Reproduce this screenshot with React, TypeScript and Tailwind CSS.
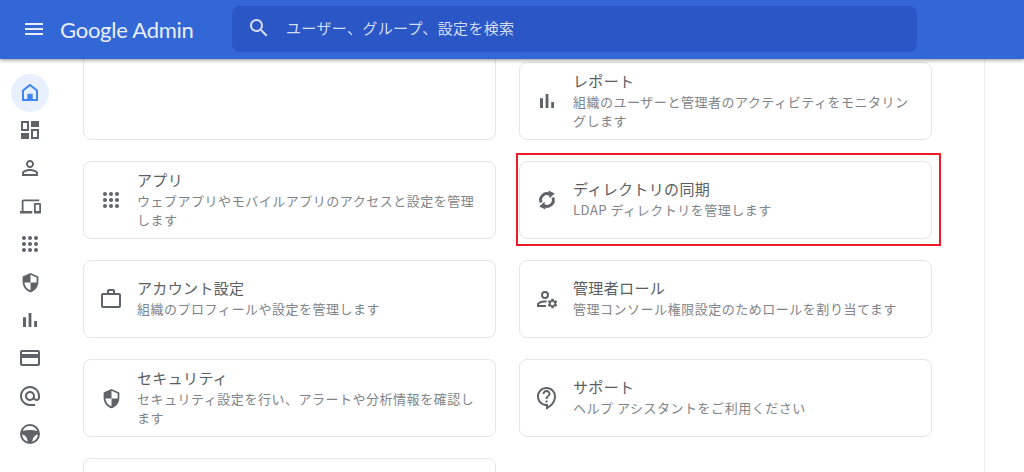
import { ReactNode } from "react";

const FONT = { fontFamily: '"Noto Sans CJK JP", "Noto Sans", sans-serif' };

const paths = {
  menu: "M3 18h18v-2H3v2zm0-5h18v-2H3v2zm0-7v2h18V6H3z",
  search:
    "M15.5 14h-.79l-.28-.27C15.41 12.59 16 11.11 16 9.5 16 5.91 13.09 3 9.5 3S3 5.91 3 9.5 5.91 16 9.5 16c1.61 0 3.09-.59 4.23-1.57l.27.28v.79l5 4.99L20.49 19l-4.99-5zm-6 0C7.01 14 5 11.99 5 9.5S7.01 5 9.5 5 14 7.01 14 9.5 11.99 14 9.5 14z",
  person:
    "M12 5.9c1.16 0 2.1.94 2.1 2.1s-.94 2.1-2.1 2.1S9.9 9.16 9.9 8s.94-2.1 2.1-2.1m0 9c2.97 0 6.1 1.46 6.1 2.1v1.1H5.9V17c0-.64 3.13-2.1 6.1-2.1M12 4C9.79 4 8 5.79 8 8s1.79 4 4 4 4-1.79 4-4-1.79-4-4-4zm0 9c-2.67 0-8 1.34-8 4v3h16v-3c0-2.66-5.33-4-8-4z",
  devices:
    "M4 6h18V4H4c-1.1 0-2 .9-2 2v11H0v3h14v-3H4V6zm19 2h-6c-.55 0-1 .45-1 1v10c0 .55.45 1 1 1h6c.55 0 1-.45 1-1V9c0-.55-.45-1-1-1zm-1 9h-4v-7h4v7z",
  shield:
    "M12 1L3 5v6c0 5.55 3.84 10.74 9 12 5.16-1.26 9-6.45 9-12V5l-9-4zm0 10.99h7c-.53 4.12-3.28 7.79-7 8.94V12H5V6.3l7-3.11v8.8z",
  bars: "M5 9.2h3V19H5zM10.6 5h2.8v14h-2.8zm5.6 8H19v6h-2.8z",
  card: "M20 4H4c-1.11 0-1.99.89-1.99 2L2 18c0 1.11.89 2 2 2h16c1.11 0 2-.89 2-2V6c0-1.11-.89-2-2-2zm0 14H4v-6h16v6zm0-10H4V6h16v2z",
  email:
    "M12 2C6.48 2 2 6.48 2 12s4.48 10 10 10h5v-2h-5c-4.34 0-8-3.66-8-8s3.66-8 8-8 8 3.66 8 8v1.43c0 .79-.71 1.57-1.5 1.57s-1.5-.78-1.5-1.57V12c0-2.76-2.24-5-5-5s-5 2.24-5 5 2.24 5 5 5c1.38 0 2.64-.56 3.54-1.47.65.89 1.77 1.47 2.96 1.47 1.97 0 3.5-1.6 3.5-3.57V12c0-5.52-4.48-10-10-10zm0 13c-1.66 0-3-1.34-3-3s1.34-3 3-3 3 1.34 3 3-1.34 3-3 3z",
  work: "M20 6h-4V4c0-1.11-.89-2-2-2h-4c-1.11 0-2 .89-2 2v2H4c-1.11 0-1.99.89-1.99 2L2 19c0 1.11.89 2 2 2h16c1.11 0 2-.89 2-2V8c0-1.11-.89-2-2-2zm-6 0h-4V4h4v2zm6 13H4V8h16v11z",
  help: "M11 23.59v-3.6c-5.01-.26-9-4.42-9-9.49C2 5.26 6.26 1 11.5 1S21 5.26 21 10.5c0 4.95-3.44 9.93-8.57 12.4L11 23.59zM11.5 3C7.36 3 4 6.36 4 10.5S7.36 18 11.5 18H13v2.3c3.64-2.3 6-6.08 6-9.8C19 6.36 15.64 3 11.5 3zm-1 11.5h2v2h-2zm2-1.5h-2c0-3.25 3-3 3-5 0-1.1-.9-2-2-2s-2 .9-2 2h-2c0-2.21 1.79-4 4-4s4 1.79 4 4c0 2.5-3 2.75-3 5z",
  gear: "M19.14 12.94c.04-.3.06-.61.06-.94 0-.32-.02-.64-.07-.94l2.03-1.58c.18-.14.23-.41.12-.61l-1.92-3.32c-.12-.22-.37-.29-.59-.22l-2.39.96c-.5-.38-1.03-.7-1.62-.94l-.36-2.54c-.04-.24-.24-.41-.48-.41h-3.84c-.24 0-.43.17-.47.41l-.36 2.54c-.59.24-1.13.57-1.62.94l-2.39-.96c-.22-.08-.47 0-.59.22L2.74 8.87c-.12.21-.08.47.12.61l2.03 1.58c-.05.3-.09.63-.09.94s.02.64.07.94l-2.03 1.58c-.18.14-.23.41-.12.61l1.92 3.32c.12.22.37.29.59.22l2.39-.96c.5.38 1.03.7 1.62.94l.36 2.54c.05.24.24.41.48.41h3.84c.24 0 .44-.17.47-.41l.36-2.54c.59-.24 1.13-.56 1.62-.94l2.39.96c.22.08.47 0 .59-.22l1.92-3.32c.12-.22.07-.47-.12-.61l-2.01-1.58zM12 15.6c-1.98 0-3.6-1.62-3.6-3.6s1.62-3.6 3.6-3.6 3.6 1.62 3.6 3.6-1.62 3.6-3.6 3.6z",
};

function Icon({ d, className = "w-6 h-6" }: { d: string; className?: string }) {
  return (
    <svg viewBox="0 0 24 24" fill="currentColor" className={`shrink-0 ${className}`}>
      <path d={d} />
    </svg>
  );
}

function Dots() {
  const at = [6, 12, 18];
  return (
    <svg viewBox="0 0 24 24" fill="currentColor" className="w-6 h-6 shrink-0">
      {at.map((y) => at.map((x) => <circle key={`${x}-${y}`} cx={x} cy={y} r="2" />))}
    </svg>
  );
}

function HomeIcon() {
  return (
    <svg viewBox="0 0 24 24" className="w-6 h-6 text-[#4285f4]" fill="currentColor">
      <path fillRule="evenodd" d="M12 2.8 4 8.9V20h16V8.9zM18 18H6V9.9l6-4.6 6 4.6z" />
      <rect x="9.3" y="12.8" width="5.4" height="6" />
    </svg>
  );
}

function DashboardIcon() {
  return (
    <svg viewBox="0 0 24 24" className="w-6 h-6" fill="currentColor">
      <path d="M3 3h8v10H3zm2 2v6h4V5z" fillRule="evenodd" />
      <rect x="13" y="3" width="8" height="6" />
      <rect x="3" y="15" width="8" height="6" />
      <path d="M13 11h8v10h-8zm2 2v6h4v-6z" fillRule="evenodd" />
    </svg>
  );
}

function WheelIcon() {
  return (
    <svg viewBox="0 0 24 24" className="w-6 h-6" fill="currentColor">
      <path
        fillRule="evenodd"
        d="M12 2a10 10 0 1 0 0 20 10 10 0 0 0 0-20zm0 2c3.4 0 6.3 2.1 7.4 5.1-2.2-.7-4.7-1.1-7.4-1.1s-5.2.4-7.4 1.1A8 8 0 0 1 12 4zM4.1 12.6c2.6.3 5 2.4 5.6 7.1a8 8 0 0 1-5.6-7.1zm10.2 7.1c.6-4.7 3-6.8 5.6-7.1a8 8 0 0 1-5.6 7.1z"
      />
    </svg>
  );
}

function AdminRoleIcon() {
  return (
    <svg viewBox="0 0 24 24" className="w-6 h-6 shrink-0" fill="currentColor">
      <path
        fillRule="evenodd"
        d="M10 4a4 4 0 1 0 0 8 4 4 0 0 0 0-8zm0 2a2 2 0 1 1 0 4 2 2 0 0 1 0-4zM2 20v-2.5C2 15 6.5 13.5 10 13.5c.6 0 1.2 0 1.8.1l-.4 2c-.5-.1-.9-.1-1.4-.1-2.8 0-6 1.2-6 2V18h7v2z"
      />
      <g transform="translate(11.5 10.5) scale(.5)">
        <path d={paths.gear} />
      </g>
    </svg>
  );
}

function SyncIcon() {
  return (
    <svg viewBox="0 0 24 24" className="w-6 h-6 shrink-0" fill="currentColor">
      <path d="M6.2 14.5A6.3 6.3 0 0 1 14.5 6.2" fill="none" stroke="currentColor" strokeWidth="2.9" />
      <path d="M17.8 9.5A6.3 6.3 0 0 1 9.5 17.8" fill="none" stroke="currentColor" strokeWidth="2.9" />
      <path d="M13.5 2.5 19.8 5.5 14.5 10.2z" />
      <path d="M10.5 21.5 4.2 18.5 9.5 13.8z" />
    </svg>
  );
}

function ShieldIcon() {
  return <Icon d={paths.shield} className="w-[21px] h-[21px] -scale-x-100" />;
}

const sideItems: ReactNode[] = [
  <DashboardIcon key="dash" />,
  <Icon key="person" d={paths.person} />,
  <Icon key="devices" d={paths.devices} className="w-[21px] h-[21px]" />,
  <Dots key="apps" />,
  <ShieldIcon key="shield" />,
  <Icon key="bars" d={paths.bars} />,
  <Icon key="card" d={paths.card} />,
  <Icon key="email" d={paths.email} />,
  <WheelIcon key="wheel" />,
];

interface CardProps {
  icon?: ReactNode;
  title?: string;
  desc?: string;
  className?: string;
  children?: ReactNode;
}

function Card({ icon, title, desc, className = "", children }: CardProps) {
  return (
    <div
      className={`relative h-[78px] flex items-center gap-[14px] pl-[15px] bg-white border border-[#e4e5e6] rounded-lg text-[#5f6368] ${className}`}
    >
      <div className="w-6 flex justify-center shrink-0">{icon}</div>
      {title && (
        <div className="w-[342px] pb-[1px]">
          <div className="mb-[1px] text-[15px] leading-[20px] tracking-[0.35px] text-[#5a5e62]">{title}</div>
          <div className="text-[13px] leading-[19.5px] tracking-[0.52px] text-[#7f8488]">{desc}</div>
        </div>
      )}
      {children}
    </div>
  );
}

export default function App() {
  return (
    <div className="w-[1024px] h-[472px] overflow-hidden flex flex-col bg-white" style={FONT}>
      <header className="relative z-10 h-[59px] shrink-0 flex items-center pb-[1px] bg-[#3367d6] shadow-[0_1px_4px_rgba(0,0,0,0.45)]">
        <div className="w-[60px] flex justify-center pl-[8px] text-[#e6ecfa]">
          <Icon d={paths.menu} />
        </div>
        <div
          className="w-[172px] text-[22px] tracking-[-0.25px] text-[#e8eefb]"
          style={{ fontFamily: "Lato, sans-serif" }}
        >
          Google Admin
        </div>
        <div className="w-[685px] h-[46px] flex items-center gap-[15px] pl-[15px] pb-[2px] rounded-lg bg-[#2a56c6] text-[#d3dcf3]">
          <Icon d={paths.search} />
          <span className="text-[15px] tracking-[0.35px]">ユーザー、グループ、設定を検索</span>
        </div>
      </header>

      <div className="flex flex-1 min-h-0">
        <nav className="w-[60px] shrink-0 pt-[15px] flex flex-col items-center text-[#5f6368]">
          <div className="w-[38px] h-[38px] -mb-[1px] rounded-full bg-[#e8f0fe] flex items-center justify-center">
            <HomeIcon />
          </div>
          {sideItems.map((item, i) => (
            <div key={i} className="w-[38px] h-[38px] flex items-center justify-center">
              {item}
            </div>
          ))}
        </nav>

        <main className="w-[925px] border-r border-[#ececec] pl-[23px] pt-[3px] overflow-hidden">
          <div className="grid grid-cols-[413px_413px] gap-x-[23px] gap-y-[21px]">
            <Card className="self-end h-[110px] -mt-[32px]" />
            <Card
              className="self-end"
              icon={<Icon d={paths.bars} />}
              title="レポート"
              desc="組織のユーザーと管理者のアクティビティをモニタリングします"
            />
            <Card
              icon={<Dots />}
              title="アプリ"
              desc="ウェブアプリやモバイルアプリのアクセスと設定を管理します"
            />
            <Card icon={<SyncIcon />} title="ディレクトリの同期" desc="LDAP ディレクトリを管理します">
              <div className="absolute -left-[4px] -top-[9px] w-[425px] h-[93px] border-2 border-[#ed1c24]" />
            </Card>
            <Card
              icon={<Icon d={paths.work} />}
              title="アカウント設定"
              desc="組織のプロフィールや設定を管理します"
            />
            <Card
              icon={<AdminRoleIcon />}
              title="管理者ロール"
              desc="管理コンソール権限設定のためロールを割り当てます"
            />
            <Card icon={<ShieldIcon />} title="セキュリティ" desc="セキュリティ設定を行い、アラートや分析情報を確認します" />
            <Card
              icon={<Icon d={paths.help} />}
              title="サポート"
              desc="ヘルプ アシスタントをご利用ください"
            />
            <Card />
          </div>
        </main>
      </div>
    </div>
  );
}
